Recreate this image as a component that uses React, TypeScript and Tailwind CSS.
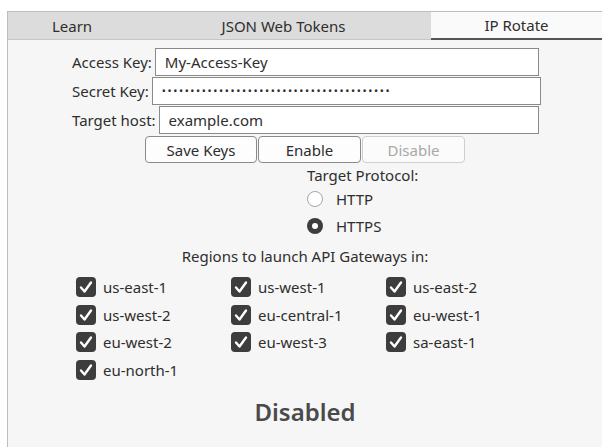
import React, { useState } from 'react'

const regions = [
  'us-east-1',
  'us-west-1',
  'us-east-2',
  'us-west-2',
  'eu-central-1',
  'eu-west-1',
  'eu-west-2',
  'eu-west-3',
  'sa-east-1',
  'eu-north-1',
]

const Field: React.FC<{ label: string; children: React.ReactNode }> = ({ label, children }) => (
  <div className="flex h-[28px] items-stretch">
    <span className="flex items-center pr-[3px] text-[#2e2e2e]">{label}</span>
    {children}
  </div>
)

const Check: React.FC<{ label: string }> = ({ label }) => (
  <div className="flex h-[27.7px] items-center gap-[7px]">
    <span className="flex h-[20px] w-[20px] items-center justify-center rounded-[4px] bg-[#3d3d3d]">
      <svg viewBox="0 0 20 20" className="h-[20px] w-[20px]">
        <polyline
          points="5,10.5 8.5,14.5 15,5.5"
          fill="none"
          stroke="white"
          strokeWidth="2.4"
          strokeLinecap="round"
          strokeLinejoin="round"
        />
      </svg>
    </span>
    <span className="text-[#2e2e2e]">{label}</span>
  </div>
)

export default function App() {
  const [protocol, setProtocol] = useState('https')

  return (
    <div
      className="h-[447px] w-[602px] overflow-hidden bg-white pt-[11px] text-[15px] leading-[20px]"
      style={{ fontFamily: '"Noto Sans", sans-serif' }}
    >
      {/* Tabs */}
      <div className="ml-[7px] flex h-[29px] border-l border-t border-[#bdbdbd] text-[#2e2e2e]">
        <div className="flex w-[128px] items-center justify-center border-b border-[#c6c6c6] bg-[#dcdcdc]">
          Learn
        </div>
        <div className="flex w-[295px] items-center justify-center border-b border-[#c6c6c6] bg-[#dcdcdc]">
          JSON Web Tokens
        </div>
        <div className="flex flex-1 items-center justify-center border-b-2 border-[#555] bg-[#fafafa]">
          IP Rotate
        </div>
      </div>

      {/* Panel */}
      <div className="ml-[7px] h-[407px] border-l border-[#bdbdbd] bg-[#f6f6f6] pt-[8px]">
        <div className="ml-[64px] flex w-[467px] flex-col gap-[1px]">
          <Field label="Access Key:">
            <input
              readOnly
              value="My-Access-Key"
              className="flex-1 border border-[#8a8a8a] bg-white px-[9px] text-[#2e2e2e] outline-none"
            />
          </Field>
          <Field label="Secret Key:">
            <input
              readOnly
              type="password"
              value="xxxxxxxxxxxxxxxxxxxxxxxxxxxxxxxxxxxxxxxx"
              className="mr-[-2px] flex-1 border border-[#8a8a8a] bg-white px-[9px] text-[11px] tracking-[1.6px] text-[#2e2e2e] outline-none"
            />
          </Field>
          <Field label="Target host:">
            <input
              readOnly
              value="example.com"
              className="flex-1 border border-[#8a8a8a] bg-white px-[9px] text-[#2e2e2e] outline-none"
            />
          </Field>
        </div>

        <div className="mt-[2px] flex justify-center gap-[1px]">
          <button className="h-[27px] w-[112px] rounded-[4px] border border-[#8a8a8a] bg-[#fdfdfd] text-[#2e2e2e]">
            Save Keys
          </button>
          <button className="h-[27px] w-[103px] rounded-[4px] border border-[#8a8a8a] bg-[#fdfdfd] text-[#2e2e2e]">
            Enable
          </button>
          <button
            disabled
            className="h-[27px] w-[103px] rounded-[4px] border border-[#cfcfcf] bg-[#fbfbfb] text-[#a8a8a8]"
          >
            Disable
          </button>
        </div>

        <div className="ml-[299px] mt-[2px] text-[#2e2e2e]">
          <div className="h-[20px]">Target Protocol:</div>
          {[
            { id: 'http', label: 'HTTP' },
            { id: 'https', label: 'HTTPS' },
          ].map((p) => (
            <div
              key={p.id}
              onClick={() => setProtocol(p.id)}
              className="flex h-[27px] items-center gap-[13px]"
            >
              {protocol === p.id ? (
                <span className="flex h-[16px] w-[16px] items-center justify-center rounded-full bg-[#3d3d3d]">
                  <span className="h-[6px] w-[6px] rounded-full bg-white" />
                </span>
              ) : (
                <span className="h-[16px] w-[16px] rounded-full border-[1.5px] border-[#a6a6a6] bg-white" />
              )}
              <span>{p.label}</span>
            </div>
          ))}
        </div>

        <div className="mt-[7px] h-[20px] text-center text-[#2e2e2e]">Regions to launch API Gateways in:</div>

        <div className="ml-[68px] mt-[7px] grid w-[465px] grid-cols-3">
          {regions.map((r) => (
            <Check key={r} label={r} />
          ))}
        </div>

        <div className="mt-[12px] text-center text-[24px] font-semibold leading-[32px] text-[#4a4a4a]">
          Disabled
        </div>
      </div>
    </div>
  )
}
